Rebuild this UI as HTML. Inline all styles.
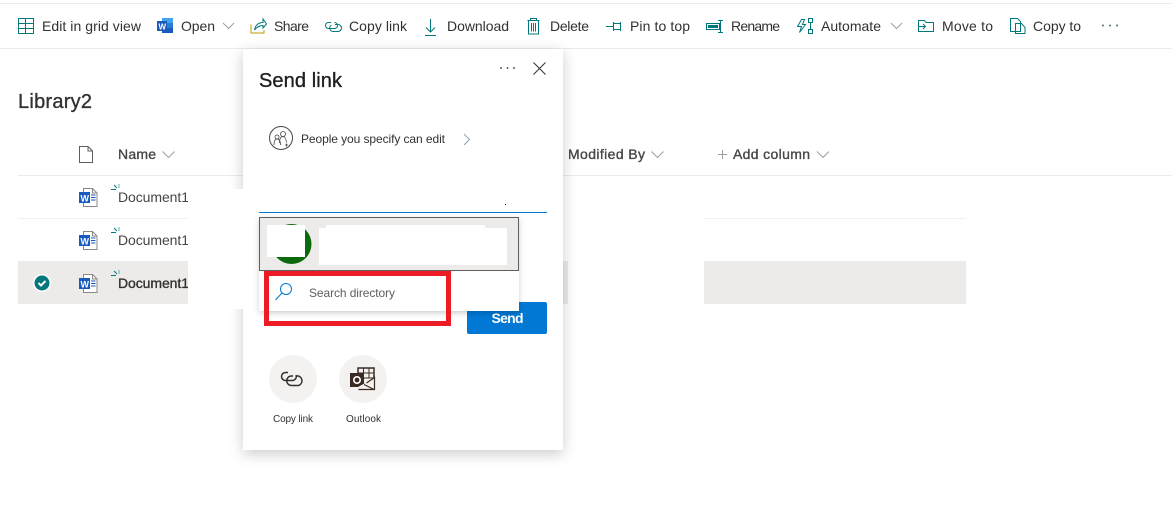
<!DOCTYPE html>
<html><head><meta charset="utf-8"><style>
html,body{margin:0;padding:0;background:#fff;width:1172px;height:531px;overflow:hidden}
svg{display:block}
text{font-family:"Liberation Sans",sans-serif;font-size:14px;fill:#323130}
.t{stroke:#03787c;fill:none;stroke-width:1}
.s{stroke:#323130;stroke-width:.35}
.c{fill:none;stroke:#a19f9d;stroke-width:1}
</style></head><body>
<svg width="1172" height="531" viewBox="0 0 1172 531" xmlns="http://www.w3.org/2000/svg">
<defs>
<filter id="sh" x="-10%" y="-10%" width="120%" height="125%"><feDropShadow dx="0" dy="4" stdDeviation="7" flood-color="#000" flood-opacity=".2"/></filter>
<filter id="sh2" x="-10%" y="-20%" width="120%" height="150%"><feDropShadow dx="0" dy="2" stdDeviation="3" flood-color="#000" flood-opacity=".2"/></filter>
<clipPath id="cl"><rect x="0" y="170" width="188" height="140"/></clipPath>
<g id="doc"><path d="M83.500 188.500h9l4.500 4.500v13.500h-13.500z" fill="#fff" stroke="#8a8886"/><path d="M92.500 188.500v4.500h4.500" fill="none" stroke="#8a8886"/><rect x="79" y="192" width="11" height="11" fill="#185abd"/><text x="80.500" y="201.500" style="font-size:9px;font-weight:bold;fill:#fff">W</text><path d="M91 195h4.500M91 197.500h4.500M91 200h4.500" stroke="#185abd"/></g>
<g id="spr"><path d="M111 189.500h5M114 185l3 3" stroke="#03787c" fill="none"/><path d="M119 184v4" stroke="#5fb3b5" fill="none"/></g>
</defs>
<rect width="1172" height="531" fill="#fff"/>

<!-- top bar -->
<rect x="0" y="3" width="1172" height="1" fill="#edebe9"/>
<rect x="0" y="48" width="1172" height="1" fill="#edebe9"/>
<path class="t" d="M18.500 18.500h15v15h-15zM18.500 23.500h15M18.500 28.500h15M25.500 18.500v15"/>
<text x="42" y="31" textLength="99">Edit in grid view</text>
<path d="M162 18h11v15h-11z" fill="#185abd"/><path d="M162 18h11v5h-11z" fill="#41a5ee"/><path d="M162 23h11v5h-11z" fill="#2b7cd3"/><rect x="157" y="21" width="10" height="10" fill="#185abd"/>
<text x="158.500" y="29.500" style="font-size:8px;font-weight:bold;fill:#fff">W</text>
<text x="181" y="31" textLength="34">Open</text>
<path class="c" d="M223 23l5.500 5.500 5.500-5.500"/>
<path d="M251 24.500v8.500h13v-3" fill="none" stroke="#c19c00"/><path d="M254.500 30c1-5 4-7.500 8.500-7.500v-3.500l3.500 5-3.500 4v-2.500c-4 0-6.500 2-8.500 4.500z" fill="none" stroke="#03787c"/>
<text x="274" y="31" textLength="35">Share</text>
<path d="M331 22.500h-2.500a3 3 0 0 0 0 6h6a3 3 0 0 0 0-6M335 24.500h3a3.500 3.500 0 0 1 0 7h-5a3.500 3.500 0 0 1-1.500-6.500" fill="none" stroke="#03787c"/>
<text x="349" y="31" textLength="58">Copy link</text>
<path class="t" d="M430.500 19v13M426 27.500l4.500 4.500 4.500-4.500M425 35.500h11"/>
<text x="447" y="31" textLength="62">Download</text>
<path class="t" d="M527.500 20.500h12M530.500 20.500v-2h6v2M528.500 20.500v13.500h10v-13.500M531.500 23v8.500M533.500 23v8.500M535.500 23v8.500"/>
<text x="550" y="31" textLength="39">Delete</text>
<path class="t" d="M606 26.500h7M613.500 22v9M613.500 23.500h7v6h-7M620.500 22v9"/>
<text x="630" y="31" textLength="60">Pin to top</text>
<path class="t" d="M706.500 23.500h13v6h-13z"/><rect x="708" y="25" width="10" height="3" fill="#03787c"/><path class="t" d="M718 20.500h5M720.500 20.500v12M718 32.500h5"/>
<text x="731" y="31" textLength="49">Rename</text>
<path class="t" d="M801.500 19.500l-4 7h4l-2 6 6-8h-3l2-5zM808.500 18.500h4v4h-4zM808.500 29.500h4v4h-4zM810.500 22.500v7"/>
<text x="821" y="31" textLength="60">Automate</text>
<path class="c" d="M891 23l5.500 5.500 5.500-5.500"/>
<path class="t" d="M918.500 20.500h6l1.500 2h7.500v9h-15zM918.500 26.500h7M923 24l2.500 2.500-2.500 2.500"/>
<text x="942" y="31" textLength="51">Move to</text>
<path class="t" d="M1010.500 18.500h7l3 3v10h-10zM1015.500 23.500h6l3.500 4v6h-9.500z"/>
<text x="1033" y="31" textLength="48">Copy to</text>
<g fill="#4a6a7a"><circle cx="1103" cy="25.500" r="1"/><circle cx="1110" cy="25.500" r="1"/><circle cx="1117" cy="25.500" r="1"/></g>

<!-- list -->
<text x="18" y="108" class="s" style="font-size:20px" textLength="74">Library2</text>
<path d="M79.500 146.500h8.500l4.500 4.500v11.500h-13z M88 146.500v4.500h4.500" fill="none" stroke="#605e5c"/>
<text x="118" y="159" textLength="38" class="s" style="fill:#484644;stroke:#484644">Name</text>
<path class="c" d="M162.500 151.500l6 6 6-6"/>
<rect x="18" y="175" width="1154" height="1" fill="#edebe9"/>
<rect x="18" y="218" width="170" height="1" fill="#f3f2f1"/>
<rect x="704" y="218" width="262" height="1" fill="#f3f2f1"/>
<rect x="18" y="261" width="170" height="43" fill="#edebe9"/>
<rect x="563" y="261" width="5" height="43" fill="#edebe9"/>
<rect x="704" y="261" width="262" height="43" fill="#edebe9"/>
<circle cx="42" cy="283" r="9" fill="#fff"/><circle cx="42" cy="283" r="7.500" fill="#03787c"/>
<path d="M38.500 283l2.500 2.500 4.500-4.500" fill="none" stroke="#fff" stroke-width="2"/>
<use href="#doc"/><use href="#doc" y="43"/><use href="#doc" y="86"/>
<use href="#spr"/><use href="#spr" y="43"/><use href="#spr" y="86"/>
<g clip-path="url(#cl)">
<text x="118" y="202" textLength="71" style="fill:#484644">Document1</text>
<text x="118" y="245" textLength="71" style="fill:#484644">Document1</text>
<text x="118" y="288" textLength="71" class="s">Document1</text>
</g>
<text x="568" y="159" textLength="77" class="s" style="fill:#484644;stroke:#484644">Modified By</text>
<path class="c" d="M651.500 151.500l6 6 6-6"/>
<path class="c" d="M718 154.500h9M722.500 150v9"/>
<text x="733" y="159" textLength="77" class="s" style="fill:#484644;stroke:#484644">Add column</text>
<path class="c" d="M817 151.500l6 6 6-6"/>

<!-- panel -->
<rect x="243" y="49" width="320" height="401" fill="#fff" filter="url(#sh)"/>
<rect x="188" y="189" width="55" height="120" fill="#fff"/>
<text x="259" y="87" class="s" style="font-size:20px;fill:#201f1e;stroke:#201f1e" textLength="83">Send link</text>
<g fill="#323130"><circle cx="501" cy="68" r=".9"/><circle cx="507.500" cy="68" r=".9"/><circle cx="514" cy="68" r=".9"/></g>
<path d="M533.500 62.500l12 12M545.500 62.500l-12 12" stroke="#323130" fill="none"/>
<circle cx="281" cy="138" r="11.500" fill="#fff" stroke="#484644"/>
<circle cx="283" cy="134" r="2.500" fill="none" stroke="#484644" stroke-width=".8"/><circle cx="277" cy="137" r="2" fill="none" stroke="#484644" stroke-width=".8"/>
<path d="M274 145c0-4 1-6 3-6s3.500 2 3.500 6M279.500 143c0-5 1.500-6.500 3.500-6.500s3 2 3.500 6M285 145h3M286.500 143.500v3" fill="none" stroke="#484644" stroke-width=".8"/>
<text x="301" y="143" style="font-size:12px" textLength="144">People you specify can edit</text>
<path d="M464 134l5.500 5.500-5.500 5.500" fill="none" stroke="#8fb0c4" stroke-width="1.200"/>
<rect x="259" y="212" width="288" height="1" fill="#0078d4"/>
<rect x="505" y="204" width="1" height="1" fill="#201f1e"/>

<!-- send -->
<rect x="467" y="302" width="80" height="32" rx="2" fill="#0078d4"/>
<text x="491.500" y="323" style="font-weight:bold;fill:#fff" textLength="32">Send</text>

<!-- dropdown -->
<rect x="259" y="217" width="260" height="94" fill="#fff" filter="url(#sh2)"/>
<rect x="259.500" y="217.500" width="259" height="53" fill="#edebe9" stroke="#605e5c"/>
<circle cx="291.500" cy="244" r="20" fill="#0b6a0b"/>
<rect x="267" y="225" width="38" height="32" fill="#fff"/>
<rect x="319" y="228" width="188" height="37" fill="#fff"/>
<rect x="326" y="225" width="159" height="4" fill="#fff"/>
<circle cx="286" cy="289" r="5.500" fill="none" stroke="#0078d4"/>
<path d="M282 293l-6.500 7" stroke="#0078d4" fill="none"/>
<text x="309" y="297" style="font-size:12px;fill:#605e5c" textLength="86">Search directory</text>
<rect x="266.500" y="273.500" width="182" height="50" fill="none" stroke="#ed1c24" stroke-width="5"/>

<!-- share targets -->
<circle cx="293" cy="379" r="24" fill="#f3f2f1"/>
<circle cx="363" cy="379" r="24" fill="#f3f2f1"/>
<path d="M288 372.500h-2.500a4 4 0 0 0 0 8h7a4 4 0 0 0 3.500-5.500M293 376h-1.500a4.500 4.500 0 0 0 0 9.500h7a5 5 0 0 0 0-9.500h-3" fill="none" stroke="#323130" stroke-width="1.500"/>
<rect x="358" y="368" width="16" height="16" fill="#f3f2f1" stroke="#3b2a23" stroke-width="1.500"/>
<path d="M358 373h16M358 378h16M363.500 368v10M369 368v10" stroke="#3b2a23" fill="none"/>
<rect x="350" y="373" width="14" height="14" fill="#3b2a23"/>
<circle cx="357" cy="380" r="3.200" fill="none" stroke="#fff" stroke-width="1.600"/>
<path d="M358 387h17v-10l-8 5z" fill="#f3f2f1"/>
<path d="M358.500 389.500h16v-12l-8 5.500M364 384.500l10 5" fill="none" stroke="#3b2a23" stroke-width="1.200"/>
<text x="273" y="422" style="font-size:10px" textLength="40">Copy link</text>
<text x="346" y="422" style="font-size:10px" textLength="35">Outlook</text>
</svg>
</body></html>
